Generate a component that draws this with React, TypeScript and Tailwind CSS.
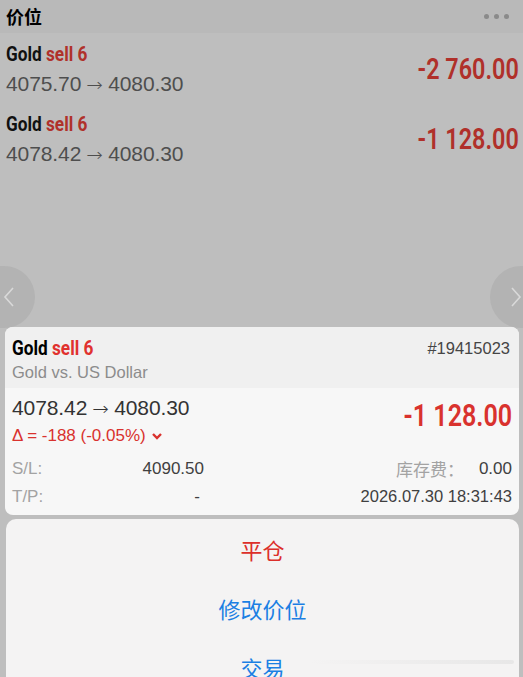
import React from "react";

const cond = { fontFamily: 'Roboto, "Liberation Sans", sans-serif' };

function Title({ dim }: { dim?: boolean }) {
  return (
    <div className="h-[20px] leading-none">
      <div className="inline-block origin-left scale-x-[0.82] whitespace-nowrap text-[21px] font-bold" style={cond}>
        <span className={dim ? "text-[#111]" : "text-black"}>Gold</span>{" "}
        <span className={dim ? "text-[#b0312a]" : "text-[#e0322e]"}>sell 6</span>
      </div>
    </div>
  );
}

function Arrow() {
  return (
    <span style={{ fontFamily: '"DejaVu Sans", sans-serif' }} className="mx-[6px] inline-block origin-center scale-x-[1.1] text-[18px] font-light">
      →
    </span>
  );
}

function ListRow({ from, amount }: { from: string; amount: string }) {
  return (
    <div className="flex h-[70px] items-center justify-between pl-[6px] pr-[4px]">
      <div className="flex flex-col gap-[9px] pt-[1px]">
        <Title dim />
        <div className="text-[21px] leading-none text-[#4e4e4e] tracking-[-0.1px] whitespace-nowrap">
          {from}
          <Arrow />
          4080.30
        </div>
      </div>
      <div
        className="origin-right scale-x-[0.78] whitespace-nowrap text-[30px] leading-none font-semibold text-[#b0302a] pt-[2px]"
        style={cond}
      >
        {amount}
      </div>
    </div>
  );
}

export default function App() {
  return (
    <div
      className="relative h-[677px] w-[523px] overflow-hidden bg-[#bebebe]"
      style={{ fontFamily: '"Liberation Sans", "Noto Sans CJK SC", sans-serif' }}
    >
      {/* header */}
      <div className="flex h-[33px] items-center justify-between bg-[#b9b9b9] pl-[6px] pr-[14px]">
        <div className="text-[18px] font-bold text-black" style={{ fontFamily: '"Noto Sans CJK SC", sans-serif' }}>
          价位
        </div>
        <div className="flex gap-[5px]">
          <span className="h-[5px] w-[5px] rounded-full bg-[#8a8a8a]" />
          <span className="h-[5px] w-[5px] rounded-full bg-[#8a8a8a]" />
          <span className="h-[5px] w-[5px] rounded-full bg-[#8a8a8a]" />
        </div>
      </div>

      <ListRow from="4075.70" amount="-2 760.00" />
      <ListRow from="4078.42" amount="-1 128.00" />

      {/* nav circles */}
      <div className="absolute left-[-29px] top-[266px] flex h-[62px] w-[64px] items-center justify-end rounded-full bg-[#b3b3b3] pr-[20px]">
        <svg width="12" height="22" viewBox="0 0 12 22" fill="none">
          <path d="M10 2 L2 11 L10 20" stroke="#d9d9d9" strokeWidth="1.6" />
        </svg>
      </div>
      <div className="absolute right-[-31px] top-[266px] flex h-[62px] w-[64px] items-center justify-start rounded-full bg-[#b3b3b3] pl-[20px]">
        <svg width="12" height="22" viewBox="0 0 12 22" fill="none">
          <path d="M2 2 L10 11 L2 20" stroke="#d9d9d9" strokeWidth="1.6" />
        </svg>
      </div>

      {/* card */}
      <div className="absolute left-[5px] right-[4px] top-[327px] overflow-hidden rounded-[8px] bg-[#f7f7f7]">
        <div className="flex h-[61px] justify-between bg-[#f0f0f0] pl-[7px] pr-[9px] pt-[11px]">
          <div className="flex flex-col gap-[6px]">
            <Title />
            <div className="text-[16.5px] leading-none text-[#8c8c8c]">Gold vs. US Dollar</div>
          </div>
          <div className="text-[16.5px] leading-none text-[#454545] pt-[2px]">#19415023</div>
        </div>
        <div className="flex justify-between pl-[7px] pr-[7px] pt-[9px]">
          <div className="flex flex-col gap-[9px]">
            <div className="text-[21px] leading-none text-[#333] tracking-[-0.1px] whitespace-nowrap">
              4078.42
              <Arrow />
              4080.30
            </div>
            <div className="flex items-center gap-[5px] text-[17px] leading-none text-[#d9322e]">
              <span>Δ = -188 (-0.05%)</span>
              <svg width="12" height="8" viewBox="0 0 12 8" fill="none">
                <path d="M2 2 L6 6 L10 2" stroke="#d9322e" strokeWidth="2.4" />
              </svg>
            </div>
          </div>
          <div
            className="origin-right scale-x-[0.81] whitespace-nowrap text-[31px] leading-none font-semibold text-[#d9322e] pt-[3px]"
            style={cond}
          >
            -1 128.00
          </div>
        </div>
        <div className="mt-[16px] grid grid-cols-[192px_1fr] pl-[7px] pr-[7px] text-[17px] leading-none">
          <div className="flex justify-between">
            <span className="text-[#a3a3a3]">S/L:</span>
            <span className="text-[#404040]">4090.50</span>
          </div>
          <div className="flex items-center justify-end">
            <span className="text-[#a3a3a3]" style={{ fontFamily: '"Noto Sans CJK SC", sans-serif' }}>库存费：</span>
            <span className="ml-[15px] text-[#404040]">0.00</span>
          </div>
          <div className="mt-[11px] flex justify-between pb-[10px]">
            <span className="text-[#a3a3a3]">T/P:</span>
            <span className="pr-[4px] text-[#404040]">-</span>
          </div>
          <div className="mt-[11px] flex justify-end">
            <span className="text-[16.5px] text-[#404040] whitespace-nowrap">2026.07.30 18:31:43</span>
          </div>
        </div>
      </div>

      {/* action sheet */}
      <div
        className="absolute left-[6px] right-[4px] top-[519px] h-[180px] rounded-t-[10px] bg-[#f4f3f3]"
        style={{ fontFamily: '"Noto Sans CJK SC", sans-serif' }}
      >
        <div className="flex flex-col items-center text-[22px] leading-none">
          <div className="flex h-[59px] items-center pt-[1px] text-[#dc2f2a]">平仓</div>
          <div className="flex h-[59px] items-center text-[#1b7fe3]">修改价位</div>
          <div className="flex h-[59px] items-center text-[#1b7fe3]">交易</div>
        </div>
        <div className="absolute left-[304px] top-[141px] h-[4px] w-[204px] rounded-full bg-gradient-to-r from-transparent to-[#e2e2e2] opacity-70" />
      </div>
    </div>
  );
}
